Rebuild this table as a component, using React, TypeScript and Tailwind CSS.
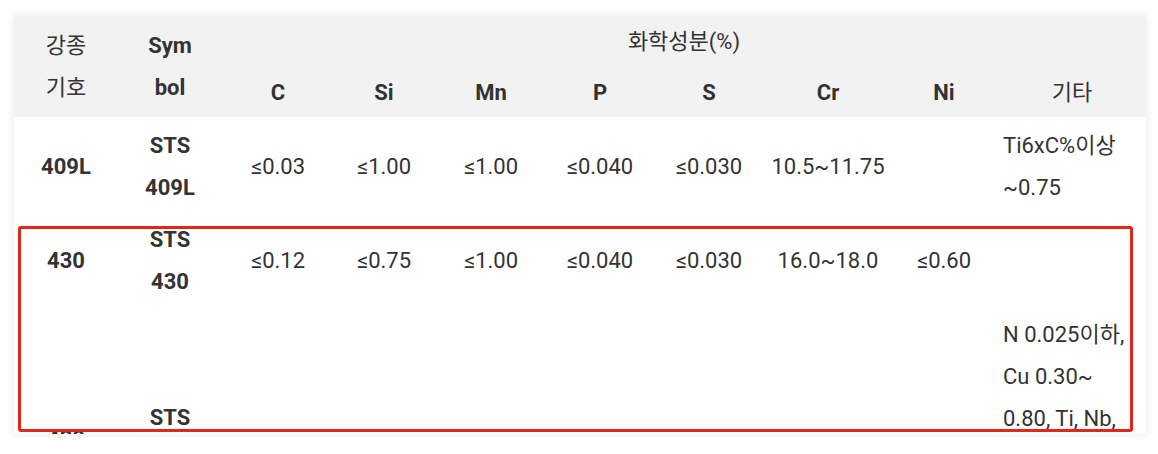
import React from "react";

const font = { fontFamily: 'Roboto, "Noto Sans CJK KR", sans-serif' };

type Row = {
  grade: string;
  sym: [string, string];
  vals: string[];
  etc: string[];
  h: string;
  etcTop?: boolean;
};

const rows: Row[] = [
  {
    grade: "409L",
    sym: ["STS", "409L"],
    vals: ["≤0.03", "≤1.00", "≤1.00", "≤0.040", "≤0.030", "10.5~11.75", ""],
    etc: ["Ti6xC%이상", "~0.75"],
    h: "h-[100px]",
  },
  {
    grade: "430",
    sym: ["STS", "430"],
    vals: ["≤0.12", "≤0.75", "≤1.00", "≤0.040", "≤0.030", "16.0~18.0", "≤0.60"],
    etc: [],
    h: "h-[88px]",
  },
  {
    grade: "430",
    sym: ["STS", "430J1L"],
    vals: ["", "", "", "", "", "", ""],
    etc: ["N 0.025이하,", "Cu 0.30~", "0.80, Ti, Nb,"],
    h: "h-[268px]",
    etcTop: true,
  },
];

export default function App() {
  return (
    <div className="relative w-[1158px] h-[454px] bg-white overflow-hidden" style={font}>
      <div className="pt-[16px] pl-[14px]">
        <div className="w-[1132px] h-[418px] overflow-hidden bg-white shadow-[0_0_8px_rgba(0,0,0,0.10)]">
          <table className="table-fixed border-collapse w-[1132px] text-[22px] leading-[42px] text-[#333333]">
            <colgroup>
              <col className="w-[104px]" />
              <col className="w-[104px]" />
              <col className="w-[112px]" />
              <col className="w-[100px]" />
              <col className="w-[114px]" />
              <col className="w-[104px]" />
              <col className="w-[114px]" />
              <col className="w-[124px]" />
              <col className="w-[108px]" />
              <col className="w-[148px]" />
            </colgroup>
            <thead className="bg-[#f2f2f2]">
              <tr className="h-[52px]">
                <th rowSpan={2} className="p-0 align-middle text-center font-normal">
                  강종
                  <br />
                  기호
                </th>
                <th rowSpan={2} className="p-0 align-middle text-center font-bold">
                  Sym
                  <br />
                  bol
                </th>
                <th colSpan={8} className="p-0 align-middle text-center font-normal">
                  화학성분(%)
                </th>
              </tr>
              <tr className="h-[49px]">
                {["C", "Si", "Mn", "P", "S", "Cr", "Ni"].map((t) => (
                  <th key={t} className="p-0 align-middle text-center font-bold">
                    {t}
                  </th>
                ))}
                <th className="p-0 align-middle text-center font-normal">기타</th>
              </tr>
            </thead>
            <tbody>
              {rows.map((r, ri) => (
                <tr key={ri} className={r.h}>
                  <td className="p-0 align-middle text-center font-bold">{r.grade}</td>
                  <td className="p-0 align-middle text-center font-bold">
                    {r.sym[0]}
                    <br />
                    {r.sym[1]}
                  </td>
                  {r.vals.map((v, i) => (
                    <td key={i} className="p-0 align-middle text-center whitespace-nowrap">
                      {v}
                    </td>
                  ))}
                  <td
                    className={
                      r.etcTop
                        ? "p-0 pl-[5px] pt-[9px] align-top text-left whitespace-nowrap"
                        : "p-0 pl-[5px] align-middle text-left whitespace-nowrap"
                    }
                  >
                    {r.etc.map((e, i) => (
                      <div key={i}>{e}</div>
                    ))}
                  </td>
                </tr>
              ))}
            </tbody>
          </table>
        </div>
      </div>
      <div className="absolute left-[18px] top-[226px] w-[1115px] h-[206px] border-[3px] border-[#e2261c] rounded-[3px] pointer-events-none" />
    </div>
  );
}
